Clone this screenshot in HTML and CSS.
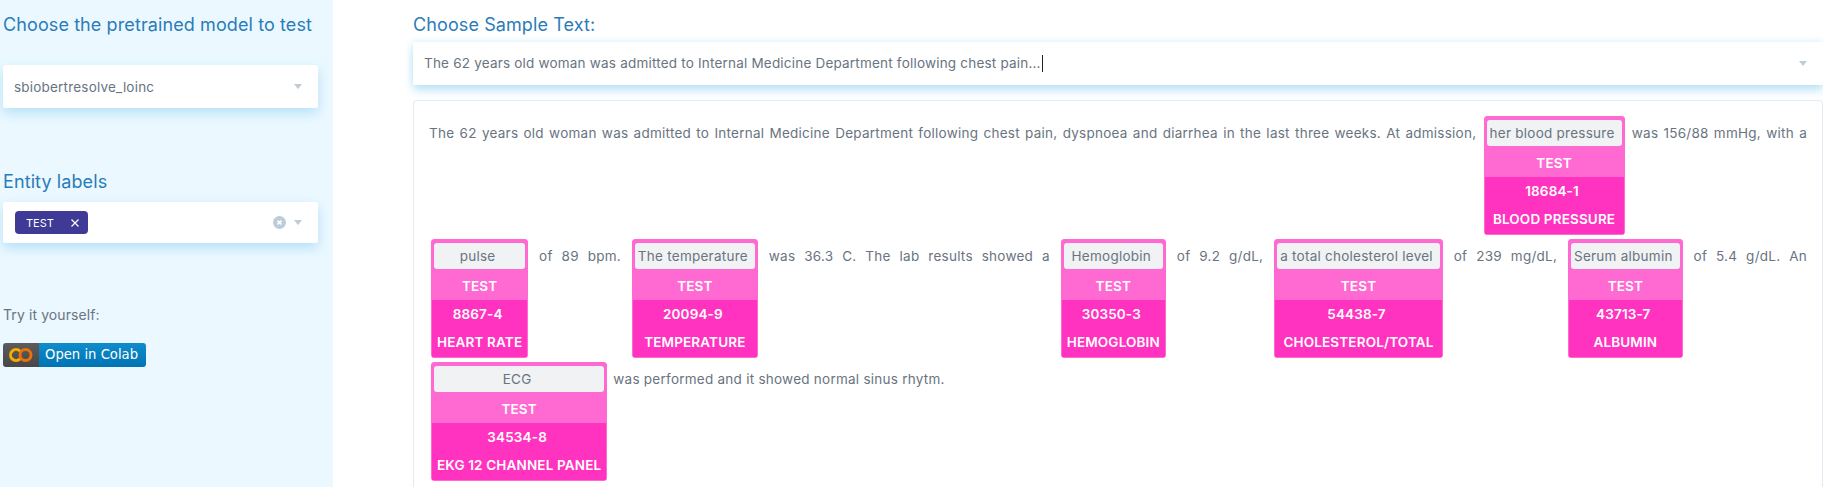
FILE: index.html
```html
<!DOCTYPE html>
<html lang="en">
<head>
    <meta charset="UTF-8">
    <meta name="viewport" content="width=device-width, initial-scale=1.0">
    <title>Resolve LOINC codes</title>
    <link rel="stylesheet" href="styles.css">
</head>
<body>
    <aside class="sidebar">
        <h2 class="label">Choose the pretrained model to test</h2>
        <div class="select select-model">
            <span class="select-value">sbiobertresolve_loinc</span>
            <span class="arrow"></span>
        </div>

        <h2 class="label label-entity">Entity labels</h2>
        <div class="select select-entity">
            <span class="chip">TEST
                <svg class="chip-x" viewBox="0 0 10 10"><path d="M1.5 1.5l7 7M8.5 1.5l-7 7"/></svg>
            </span>
            <span class="clear">
                <svg viewBox="0 0 14 14"><circle cx="7" cy="7" r="7"/><path d="M4.9 4.9l4.2 4.2M9.1 4.9l-4.2 4.2"/></svg>
            </span>
            <span class="arrow"></span>
        </div>

        <p class="try">Try it yourself:</p>
        <a class="badge" href="#">
            <span class="badge-logo">
                <svg viewBox="0 0 24 14">
                    <circle class="co-o" cx="16.5" cy="7" r="5.5"/>
                    <path class="co-c" d="M10.9 3.1a5.5 5.5 0 1 0 0 7.8"/>
                </svg>
            </span>
            <span class="badge-text">Open in Colab</span>
        </a>
    </aside>

    <main class="main">
        <h2 class="label">Choose Sample Text:</h2>
        <div class="select select-text">
            <span class="select-value">The 62 years old woman was admitted to Internal Medicine Department following chest pain...<i class="caret"></i></span>
            <span class="arrow"></span>
        </div>

        <div class="result">
            The 62 years old woman was admitted to Internal Medicine Department following chest pain, dyspnoea and diarrhea in the last three weeks. At admission,
            <span class="entity"><span class="entity-name">her blood pressure</span><span class="entity-type">TEST</span><span class="entity-code">18684-1</span><span class="entity-desc">BLOOD PRESSURE</span></span>
            was 156/88 mmHg, with a
            <span class="entity"><span class="entity-name">pulse</span><span class="entity-type">TEST</span><span class="entity-code">8867-4</span><span class="entity-desc">HEART RATE</span></span>
            of 89 bpm.
            <span class="entity"><span class="entity-name">The temperature</span><span class="entity-type">TEST</span><span class="entity-code">20094-9</span><span class="entity-desc">TEMPERATURE</span></span>
            was 36.3 C. The lab results showed a
            <span class="entity"><span class="entity-name">Hemoglobin</span><span class="entity-type">TEST</span><span class="entity-code">30350-3</span><span class="entity-desc">HEMOGLOBIN</span></span>
            of 9.2 g/dL,
            <span class="entity"><span class="entity-name">a total cholesterol level</span><span class="entity-type">TEST</span><span class="entity-code">54438-7</span><span class="entity-desc">CHOLESTEROL/TOTAL</span></span>
            of 239 mg/dL,
            <span class="entity"><span class="entity-name">Serum albumin</span><span class="entity-type">TEST</span><span class="entity-code">43713-7</span><span class="entity-desc">ALBUMIN</span></span>
            of 5.4 g/dL. An
            <span class="entity"><span class="entity-name">ECG</span><span class="entity-type">TEST</span><span class="entity-code">34534-8</span><span class="entity-desc">EKG 12 CHANNEL PANEL</span></span>
            was performed and it showed normal sinus rhytm.
        </div>
    </main>
</body>
</html>
```

FILE: styles.css
```css
* {
    box-sizing: border-box;
}

body {
    display: flex;
    height: 100vh;
    margin: 0;
    overflow: hidden;
    background: #fff;
    color: #69747f;
    font-family: Inter, "Noto Sans", sans-serif;
    font-size: 14px;
}

.sidebar {
    flex: 0 0 333px;
    padding: 14px 15px 0 3px;
    background: #ebf8ff;
}

.main {
    flex: 1;
    min-width: 0;
    padding: 14px 0 0 80px;
}

.label {
    margin: 0 0 6px;
    color: #2a7cb9;
    font-size: 18px;
    font-weight: 400;
    line-height: 22px;
    letter-spacing: 0.1px;
}

.select {
    display: flex;
    align-items: center;
    background: #fff;
    border-radius: 2px;
    box-shadow: 0 5px 12px rgba(100, 190, 235, 0.4);
}

.select-model {
    height: 43px;
    margin: 29px 0 63px;
    padding: 0 16px 0 11px;
}

.select-entity {
    height: 41px;
    margin-top: 9px;
    padding: 0 16px 0 12px;
}

.select-text {
    height: 43px;
    padding: 0 16px 0 11px;
    box-shadow: 0 5px 10px rgba(100, 190, 235, 0.45), 0 -2px 6px rgba(100, 190, 235, 0.12);
}

.select-value {
    flex: 1;
    font-size: 13.5px;
    letter-spacing: 0.2px;
}

.caret {
    display: inline-block;
    width: 1px;
    height: 17px;
    margin-left: 1px;
    vertical-align: -4px;
    background: #222;
}

.arrow {
    width: 0;
    height: 0;
    border-top: 5px solid #bccdd8;
    border-left: 4.5px solid transparent;
    border-right: 4.5px solid transparent;
}

.chip {
    display: flex;
    align-items: center;
    justify-content: space-between;
    width: 73px;
    height: 23px;
    margin-right: auto;
    padding: 0 8px 0 11px;
    background: #3e3a96;
    border-radius: 4px;
    color: #fff;
    font-size: 11px;
}

.chip-x {
    width: 10px;
    height: 10px;
    fill: none;
    stroke: #fff;
    stroke-width: 1.2;
}

.clear {
    display: flex;
    margin-right: 8px;
}

.clear svg {
    width: 13px;
    height: 13px;
}

.clear circle {
    fill: #bccdd8;
}

.clear path {
    fill: none;
    stroke: #fff;
    stroke-width: 1.8;
}

.try {
    margin: 63px 0 19px;
    font-size: 14px;
    line-height: 18px;
    letter-spacing: 0.1px;
}

.badge {
    display: flex;
    width: 143px;
    height: 24px;
    border-radius: 3px;
    overflow: hidden;
    color: #fff;
    text-decoration: none;
    font-family: "DejaVu Sans", sans-serif;
    font-size: 13.2px;
}

.badge-logo {
    display: flex;
    align-items: center;
    justify-content: center;
    width: 36px;
    background: linear-gradient(#5c5c5c, #474747);
}

.badge-logo svg {
    width: 24px;
    height: 14px;
    fill: none;
    stroke-width: 3;
}

.co-c {
    stroke: #f9ab00;
}

.co-o {
    stroke: #e8710a;
}

.badge-text {
    flex: 1;
    padding-left: 6px;
    background: linear-gradient(#108ccc, #0073b3);
    line-height: 24px;
    white-space: nowrap;
}

.result {
    margin-top: 15px;
    height: 400px;
    padding: 15px 15px 0;
    border: 1px solid #e6e9f4;
    border-radius: 4px;
    font-size: 13.5px;
    line-height: 21px;
    letter-spacing: 0.25px;
    text-align: justify;
}

.entity {
    display: inline-grid;
    margin: 0 2px 4px;
    background: #ff69d2;
    border: 1px solid #ff69d2;
    border-radius: 3px;
    text-align: center;
}

.entity-name {
    margin: 3px 2px 0;
    padding: 0 7px 0 3px;
    background: #f0f2f4;
    border-radius: 3px;
    line-height: 26px;
    white-space: nowrap;
}

.entity-type,
.entity-code,
.entity-desc {
    padding: 0 5px;
    color: #fff;
    font-weight: 600;
    letter-spacing: 0.15px;
    white-space: nowrap;
}

.entity-type {
    padding-top: 4px;
    line-height: 27px;
}

.entity-code {
    padding: 0 8px 0 4px;
    background: #ff33c0;
    line-height: 28px;
}

.entity-desc {
    background: #ff33c0;
    line-height: 29px;
}
```
